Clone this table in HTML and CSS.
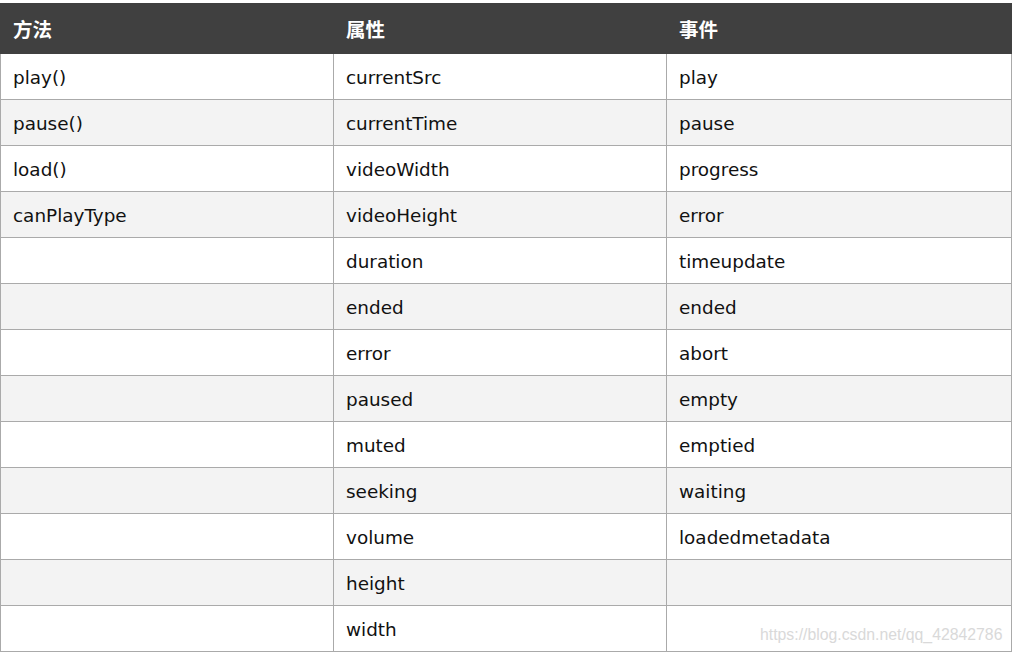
FILE: index.html
```html
<!DOCTYPE html>
<html>
<head>
<meta charset="utf-8">
<link rel="stylesheet" href="styles.css">
</head>
<body>
<div class="wrap">
<table class="tbl">
  <colgroup><col class="c1"><col class="c2"><col class="c3"></colgroup>
  <thead>
    <tr><th>方法</th><th>属性</th><th>事件</th></tr>
  </thead>
  <tbody>
    <tr><td>play()</td><td>currentSrc</td><td>play</td></tr>
    <tr><td>pause()</td><td>currentTime</td><td>pause</td></tr>
    <tr><td>load()</td><td>videoWidth</td><td>progress</td></tr>
    <tr><td>canPlayType</td><td>videoHeight</td><td>error</td></tr>
    <tr><td></td><td>duration</td><td>timeupdate</td></tr>
    <tr><td></td><td>ended</td><td>ended</td></tr>
    <tr><td></td><td>error</td><td>abort</td></tr>
    <tr><td></td><td>paused</td><td>empty</td></tr>
    <tr><td></td><td>muted</td><td>emptied</td></tr>
    <tr><td></td><td>seeking</td><td>waiting</td></tr>
    <tr><td></td><td>volume</td><td>loadedmetadata</td></tr>
    <tr><td></td><td>height</td><td></td></tr>
    <tr><td></td><td>width</td><td></td></tr>
  </tbody>
</table>
<span class="mark">https://blog.csdn.net/qq_42842786</span>
</div>
</body>
</html>
```
FILE: styles.css
```css
html, body {
  margin: 0;
  padding: 0;
  background: #ffffff;
}
.wrap {
  position: relative;
  padding-top: 3px;
  width: 1011px;
}
.tbl {
  border-collapse: collapse;
  table-layout: fixed;
  width: 1011px;
  font-family: "DejaVu Sans", "Noto Sans CJK SC", sans-serif;
  font-size: 18.4px;
  color: #111;
}
.c1 { width: 333px; }
.c2 { width: 333px; }
.c3 { width: 345px; }
.tbl th {
  background: #404040;
  color: #fff;
  font-weight: bold;
  text-align: left;
  height: 50px;
  padding: 0 12px;
  box-sizing: border-box;
  border: 1px solid #404040;
  font-family: "Noto Sans CJK SC", sans-serif;
  font-size: 19.5px;
}
.tbl td {
  height: 46px;
  box-sizing: border-box;
  padding: 2px 12px 0;
  border: 1px solid #aaaaaa;
  vertical-align: middle;
}
.tbl tbody tr:nth-child(even) td {
  background: #f3f3f3;
}
.mark {
  position: absolute;
  left: 760px;
  top: 626px;
  font-family: "Liberation Sans", sans-serif;
  font-size: 15.8px;
  color: #d9d9d9;
}
```
